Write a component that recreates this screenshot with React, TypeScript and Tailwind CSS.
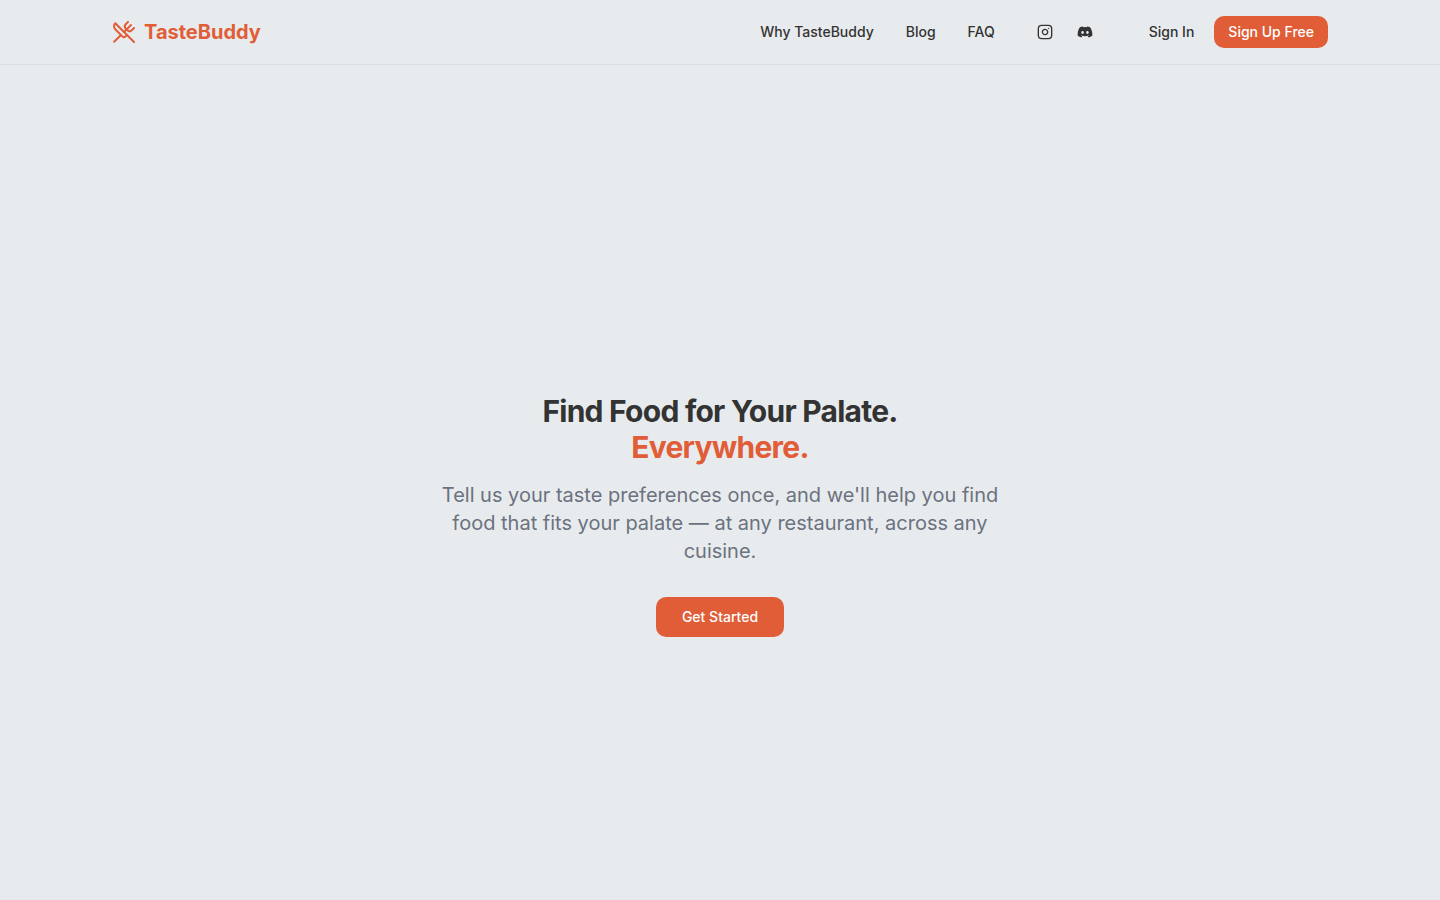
import React from 'react';
import { Instagram, UtensilsCrossed } from 'lucide-react';
import { FaDiscord } from 'react-icons/fa';

const navLinks = [
  { label: 'Why TasteBuddy', href: '#why' },
  { label: 'Blog', href: '#blog' },
  { label: 'FAQ', href: '#faq' },
];

function Header() {
  return (
    <header className="border-b border-[#dadde0]">
      <div className="mx-auto flex h-16 max-w-7xl items-center justify-between px-8">
        <a href="#" className="flex items-center gap-2 text-[#e05d38]">
          <UtensilsCrossed className="h-6 w-6" />
          <span className="text-xl font-bold">TasteBuddy</span>
        </a>

        <div className="flex items-center text-sm font-medium">
          <nav className="flex items-center gap-8" aria-label="Main">
            {navLinks.map((link) => (
              <a key={link.label} href={link.href} className="transition-colors hover:text-[#e05d38]">
                {link.label}
              </a>
            ))}
          </nav>

          {/* Social links */}
          <div className="ml-8 flex items-center gap-1">
            <a href="#instagram" aria-label="Instagram" className="flex h-9 w-9 items-center justify-center">
              <Instagram className="h-4 w-4" />
            </a>
            <a href="#discord" aria-label="Discord" className="flex h-9 w-9 items-center justify-center">
              <FaDiscord className="h-4 w-4" />
            </a>
          </div>

          {/* Auth */}
          <div className="ml-8 flex items-center gap-1.5">
            <button type="button" className="h-8 rounded-[10px] px-3.5">
              Sign In
            </button>
            <button type="button" className="h-8 rounded-[10px] bg-[#e05d38] px-3.5 text-white">
              Sign Up Free
            </button>
          </div>
        </div>
      </div>
    </header>
  );
}

function Hero() {
  return (
    <section className="flex min-h-screen flex-col items-center justify-center px-4 text-center">
      <h1 className="text-3xl font-bold tracking-tight">
        Find Food for Your Palate.
        <span className="block text-[#e05d38]">Everywhere.</span>
      </h1>
      <p className="mt-4 max-w-xl text-xl text-[#6b7280]">
        Tell us your taste preferences once, and we'll help you find food that fits your palate — at
        any restaurant, across any cuisine.
      </p>
      <button
        type="button"
        className="mt-8 h-10 rounded-[10px] bg-[#e05d38] px-[26px] text-sm font-medium text-white"
      >
        Get Started
      </button>
    </section>
  );
}

export default function App() {
  return (
    <div className="min-h-screen bg-[#e8ebed] font-[Inter,sans-serif] text-[#333333] antialiased">
      <Header />
      <main>
        <Hero />
      </main>
    </div>
  );
}
